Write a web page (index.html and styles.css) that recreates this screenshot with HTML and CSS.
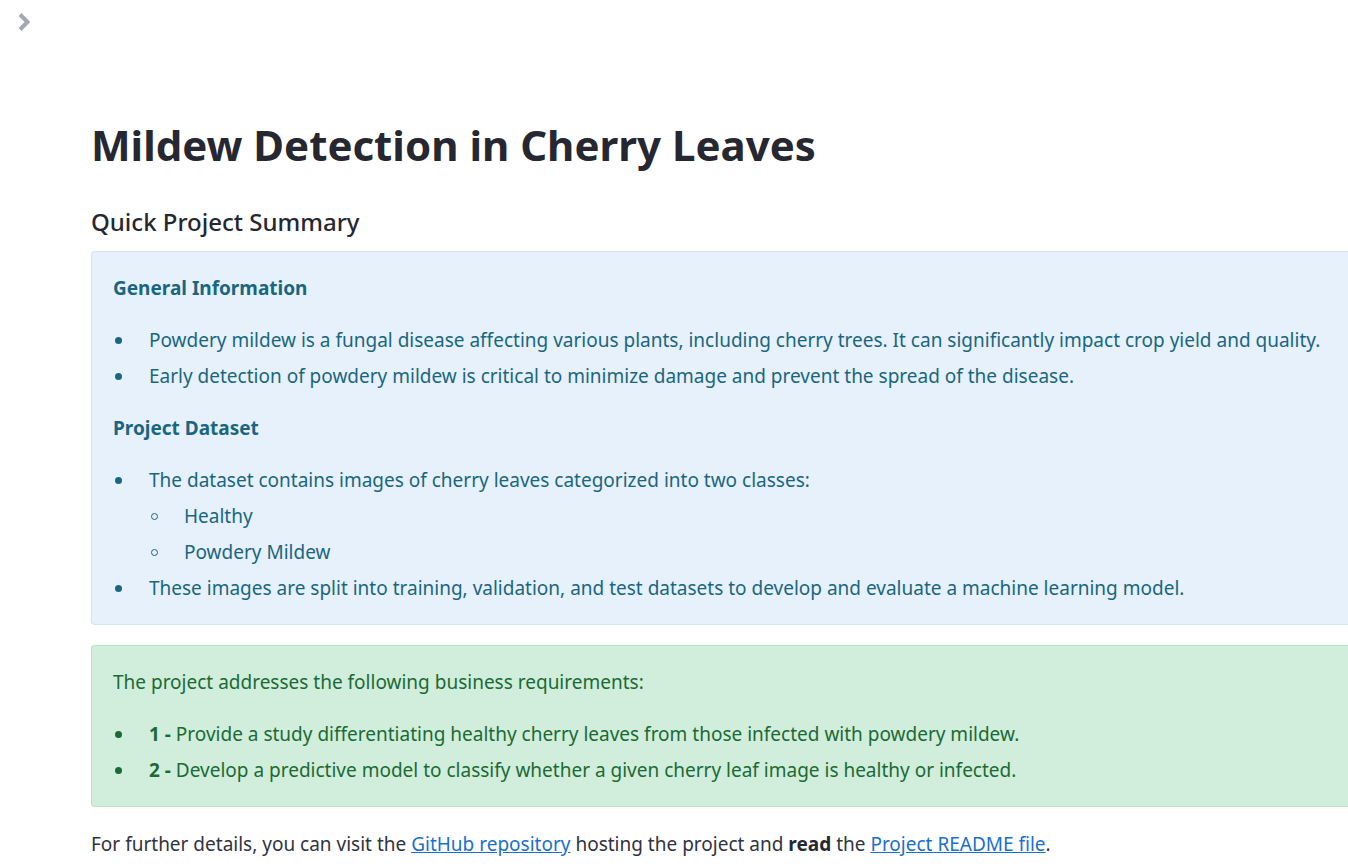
FILE: index.html
```html
<!DOCTYPE html>
<html>
<head>
<meta charset="utf-8">
<link rel="stylesheet" href="styles.css">
</head>
<body>
<button class="sidebar-toggle" aria-label="Open sidebar">
  <svg width="18" height="22" viewBox="0 0 18 22"><path d="M5 3.5 L12.5 11 L5 18.5" fill="none" stroke="#a3a8b4" stroke-width="4" stroke-linejoin="miter"/></svg>
</button>
<main class="main">
  <h1 class="title">Mildew Detection in Cherry Leaves</h1>
  <h3 class="subtitle">Quick Project Summary</h3>
  <div class="alert info">
    <p class="alert-head"><strong>General Information</strong></p>
    <ul class="list">
      <li>Powdery mildew is a fungal disease affecting various plants, including cherry trees. It can significantly impact crop yield and quality.</li>
      <li>Early detection of powdery mildew is critical to minimize damage and prevent the spread of the disease.</li>
    </ul>
    <p class="alert-head"><strong>Project Dataset</strong></p>
    <ul class="list">
      <li>The dataset contains images of cherry leaves categorized into two classes:
        <ul class="sublist">
          <li>Healthy</li>
          <li>Powdery Mildew</li>
        </ul>
      </li>
      <li>These images are split into training, validation, and test datasets to develop and evaluate a machine learning model.</li>
    </ul>
  </div>
  <div class="alert success">
    <p class="alert-head">The project addresses the following business requirements:</p>
    <ul class="list">
      <li><strong>1 -</strong> Provide a study differentiating healthy cherry leaves from those infected with powdery mildew.</li>
      <li><strong>2 -</strong> Develop a predictive model to classify whether a given cherry leaf image is healthy or infected.</li>
    </ul>
  </div>
  <p class="footer-text">For further details, you can visit the <a href="#">GitHub repository</a> hosting the project and <strong>read</strong> the <a href="#">Project README file</a>.</p>
</main>
</body>
</html>
```
FILE: styles.css
```css
html, body {
  margin: 0;
  padding: 0;
  background: #ffffff;
  overflow: hidden;
}
body {
  font-family: "Noto Sans", "Open Sans", sans-serif;
  color: #31333f;
  font-size: 19px;
  width: 1348px;
  height: 867px;
}
.sidebar-toggle {
  position: absolute;
  left: 15px;
  top: 11px;
  width: 18px;
  height: 22px;
  padding: 0;
  border: 0;
  background: none;
  display: flex;
}
.main {
  padding: 118px 0 0 91px;
}
.title {
  margin: 0;
  font-size: 42px;
  font-weight: 700;
  color: #262730;
  line-height: 54px;
}
.subtitle {
  margin: 34px 0 0 0;
  font-size: 24px;
  font-weight: 500;
  line-height: 32px;
  color: #262730;
}
.alert {
  margin-top: 13px;
  border-radius: 4px;
  padding: 18px 0 2px 21px;
  border: 1px solid;
  border-right: 0;
  border-top-right-radius: 0;
  border-bottom-right-radius: 0;
}
.info {
  background: #e6f1fb;
  border-color: #d2e4f5;
  color: #1a6681;
}
.success {
  margin-top: 20px;
  background: #d0eedb;
  border-color: #b7e4c5;
  color: #1b6a35;
}
.alert-head {
  margin: 0;
  line-height: 36px;
}
.alert-head strong {
  font-weight: 700;
}
.list {
  margin: 16px 0 16px 0;
  padding-left: 36px;
  list-style: none;
}
.list li {
  line-height: 36px;
}
.list > li::before {
  content: "";
  display: inline-block;
  width: 7px;
  height: 7px;
  border-radius: 50%;
  background: currentColor;
  margin-left: -34px;
  margin-right: 27px;
  vertical-align: 3px;
}
.sublist {
  margin: 0;
  padding-left: 36px;
  list-style: none;
}
.list .sublist > li::before {
  content: "";
  display: inline-block;
  width: 5px;
  height: 5px;
  border-radius: 50%;
  border: 1.5px solid currentColor;
  background: transparent;
  margin-left: -34px;
  margin-right: 26px;
  vertical-align: 3px;
}
.footer-text {
  margin: 19px 0 0 0;
  line-height: 36px;
  color: #31333f;
}
.footer-text a {
  color: #1a6fd0;
}
.footer-text strong {
  color: #262730;
}
```
